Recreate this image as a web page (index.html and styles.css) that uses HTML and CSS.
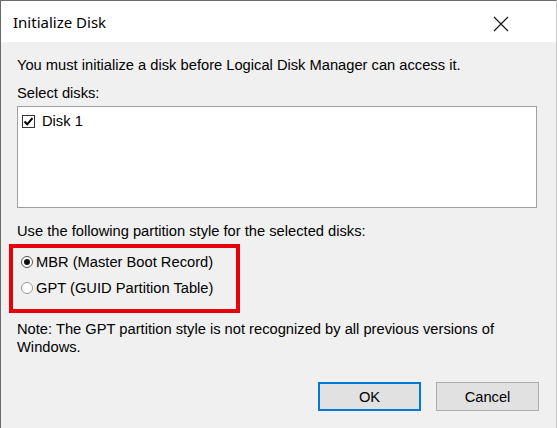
FILE: index.html
```html
<!DOCTYPE html>
<html>
<head>
<meta charset="utf-8">
<link rel="stylesheet" href="styles.css">
</head>
<body>
<div class="window">
  <div class="titlebar">
    <span class="title">Initialize Disk</span>
    <span class="close">
      <svg width="16" height="16" viewBox="0 0 16 16"><path d="M1 1 L15 15 M15 1 L1 15" stroke="#111" stroke-width="1.1" fill="none"/></svg>
    </span>
  </div>
  <div class="content">
    <p class="line intro">You must initialize a disk before Logical Disk Manager can access it.</p>
    <p class="line select">Select disks:</p>
    <div class="listbox">
      <div class="item">
        <span class="checkbox">
          <svg width="11" height="11" viewBox="0 0 11 11"><path d="M1.5 5.5 L4.2 8.3 L9.5 2.2" stroke="#000" stroke-width="2" fill="none"/></svg>
        </span>
        <span>Disk 1</span>
      </div>
    </div>
    <p class="line style">Use the following partition style for the selected disks:</p>
    <div class="highlight">
      <div class="option"><span class="radio checked"></span><span>MBR (Master Boot Record)</span></div>
      <div class="option"><span class="radio"></span><span>GPT (GUID Partition Table)</span></div>
    </div>
    <p class="line note">Note: The GPT partition style is not recognized by all previous versions of<br>Windows.</p>
    <div class="buttons">
      <button class="btn default">OK</button>
      <button class="btn">Cancel</button>
    </div>
  </div>
</div>
</body>
</html>
```

FILE: styles.css
```css
* { box-sizing: border-box; }
html, body { margin: 0; padding: 0; }
body {
  width: 557px;
  height: 428px;
  overflow: hidden;
  background: #f0f0f0;
  font-family: "Liberation Sans", Arial, sans-serif;
  font-size: 14.7px;
  color: #000;
}
.window {
  width: 557px;
  height: 428px;
  border-left: 1px solid #6a6a6a;
  border-top: 1px solid #6a6a6a;
  border-right: 1px solid #c8c8c8;
  background: #f0f0f0;
  display: flex;
  flex-direction: column;
}
.titlebar {
  height: 41px;
  background: #fff;
  display: flex;
  align-items: center;
  justify-content: space-between;
  padding: 0 47px 0 12px;
}
.title {
  font-family: "Noto Sans", "Open Sans", sans-serif;
  font-size: 15px;
  margin-top: 1px;
}
.close { display: flex; margin-top: 4px; }
.content {
  padding: 14px 0 0 16px;
  display: flex;
  flex-direction: column;
}
.line { margin: 0; line-height: 18px; }
.select { margin-top: 10px; }
.listbox {
  margin-top: 4px;
  width: 520px;
  height: 102px;
  background: #fff;
  border: 1px solid #a0a0a0;
  padding: 6px 0 0 4px;
}
.item { display: flex; align-items: center; gap: 7px; line-height: 16px; }
.checkbox {
  width: 13px; height: 13px;
  border: 1px solid #333;
  background: #fff;
  display: flex; align-items: center; justify-content: center;
}
.style { margin-top: 14px; }
.highlight {
  margin: 4px 0 0 -8px;
  width: 231px;
  height: 69px;
  border: 4px solid #e8000b;
  padding: 5px 0 0 8px;
  display: flex;
  flex-direction: column;
  gap: 8px;
}
.option { display: flex; align-items: center; gap: 3px; line-height: 18px; }
.radio {
  width: 12px; height: 12px;
  border-radius: 50%;
  border: 1px solid #9a9a9a;
  background: #fff;
  position: relative;
}
.radio.checked { border-color: #555; }
.radio.checked::after {
  content: "";
  position: absolute;
  left: 2px; top: 2px;
  width: 6px; height: 6px;
  border-radius: 50%;
  background: #111;
}
.note { margin-top: 7px; }
.buttons {
  margin-top: 26px;
  display: flex;
  justify-content: flex-end;
  gap: 15px;
  padding-right: 17px;
}
.btn {
  width: 103px;
  height: 29px;
  background: #e1e1e1;
  border: 1px solid #adadad;
  font-family: "Liberation Sans", Arial, sans-serif;
  font-size: 14.7px;
  color: #000;
  padding: 0;
}
.btn.default { border: 2px solid #0078d7; }
```
